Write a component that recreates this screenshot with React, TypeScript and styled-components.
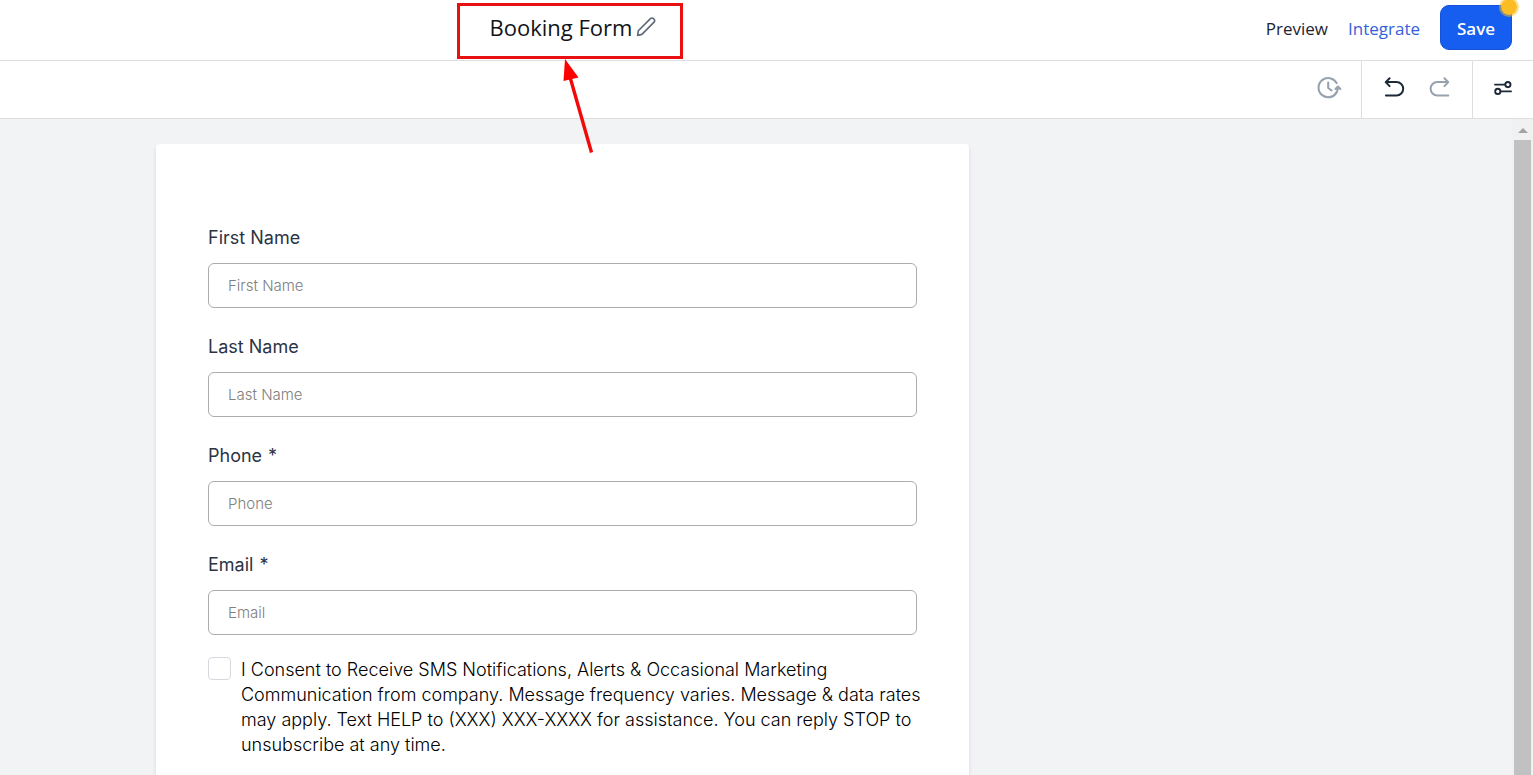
import React from "react";
import styled, { createGlobalStyle } from "styled-components";

const GlobalStyle = createGlobalStyle`
  *, *::before, *::after { box-sizing: border-box; }
  body { margin: 0; background: #f2f3f5; }
  button, input { font: inherit; }
`;

const Shell = styled.div`
  position: relative;
  display: flex;
  flex-direction: column;
  height: 100vh;
  overflow: hidden;
  font-family: "Open Sans", "Noto Sans", sans-serif;
  color: #1d2433;
`;

const Header = styled.header`
  display: grid;
  grid-template-columns: 1fr 387px;
  flex: none;
  height: 61px;
  background: #fff;
  border-bottom: 1px solid #dcdee0;
`;

const TitleArea = styled.div`
  display: flex;
  justify-content: center;
  align-items: center;
  gap: 4px;
  padding-bottom: 6px;
`;

const Title = styled.h1`
  margin: 0;
  font-size: 22px;
  line-height: 30px;
  font-weight: 400;
  color: #101418;
`;

const tones = { dark: "#1d2939", medium: "#5f6876", muted: "#98a1ae" };

const IconButton = styled.button<{ $tone?: keyof typeof tones }>`
  display: flex;
  align-items: center;
  justify-content: center;
  padding: 0;
  border: 0;
  background: none;
  color: ${(p) => tones[p.$tone ?? "dark"]};
  cursor: pointer;
`;

const Actions = styled.nav`
  display: flex;
  justify-content: flex-end;
  align-items: center;
  gap: 20px;
  padding: 0 21px 5px 0;
  font-size: 17px;
  line-height: 24px;
`;

const ActionLink = styled.a<{ $accent?: boolean }>`
  padding-top: 2px;
  color: ${(p) => (p.$accent ? "#3561d8" : "#1d2433")};
  font-weight: 500;
  text-decoration: none;
`;

const SaveButton = styled.button`
  position: relative;
  width: 72px;
  height: 45px;
  padding: 2px 0 0;
  border: 1px solid #1552d8;
  border-radius: 9px;
  background: #155eef;
  color: #fff;
  font-weight: 600;
  cursor: pointer;
`;

const UnsavedDot = styled.span`
  position: absolute;
  top: -9px;
  right: -8px;
  width: 20px;
  height: 20px;
  border: 2px solid rgba(251, 191, 36, 0.5);
  border-radius: 50%;
  background: #fbbc24;
  background-clip: padding-box;
`;

const Toolbar = styled.div`
  display: flex;
  justify-content: flex-end;
  flex: none;
  height: 58px;
  background: #fff;
  border-bottom: 1px solid #dcdee0;
`;

const ToolGroup = styled.div<{ $width: number }>`
  display: flex;
  justify-content: center;
  gap: 22px;
  width: ${(p) => p.$width}px;
  padding-bottom: 4px;
  & + & { border-left: 1px solid #dcdee0; }
`;

const Workspace = styled.div`
  display: flex;
  flex: 1;
  min-height: 0;
`;

const Canvas = styled.main`
  flex: 1;
  min-width: 0;
  padding: 25px 387px 0 0;
  overflow: hidden;
  background: #f2f3f5;
`;

const FormCard = styled.form`
  max-width: 813px;
  min-height: 100%;
  margin: 0 auto;
  padding: 81px 44px 40px 52px;
  border-radius: 4px;
  background: #fff;
  box-shadow: 0 3px 4px rgba(16, 24, 40, 0.12);
  font-family: Inter, sans-serif;
`;

const Field = styled.div`
  display: flex;
  flex-direction: column;
  gap: 12px;
  padding-right: 8px;
  & + & { margin-top: 26px; }
`;

const Label = styled.label`
  font-size: 18px;
  line-height: 26px;
  font-weight: 400;
  color: #2c3345;
`;

const Required = styled.span`
  margin-left: 6px;
`;

const TextInput = styled.input`
  width: 100%;
  height: 45px;
  padding: 0 19px;
  border: 1px solid #acacac;
  border-radius: 6px;
  background: #fff;
  font-size: 15px;
  font-weight: 300;
  color: #2c3345;
  &::placeholder { color: #808080; opacity: 1; }
`;

const Consent = styled.div`
  display: flex;
  align-items: flex-start;
  gap: 10px;
  margin-top: 22px;
`;

const Checkbox = styled.input`
  appearance: none;
  flex: none;
  width: 23px;
  height: 23px;
  margin: 0;
  border: 1px solid #d5d9de;
  border-radius: 4px;
  background: #fff;
  &:checked { background: #155eef; }
`;

const ConsentText = styled.label`
  font-size: 18px;
  line-height: 25px;
  font-weight: 300;
  color: #000;
`;

const ScrollTrack = styled.div`
  display: flex;
  flex-direction: column;
  align-items: center;
  flex: none;
  width: 21px;
  background: #f1f1f1;
`;

const ScrollArrow = styled.span`
  flex: none;
  margin: 9px 0 7px;
  border: 5px solid transparent;
  border-top: 0;
  border-bottom-color: #a3a3a3;
`;

const ScrollThumb = styled.div`
  flex: 1;
  width: 17px;
  background: #c1c1c1;
`;

const Callout = styled.div`
  position: absolute;
  top: 3px;
  left: calc(50% - 310px);
  width: 226px;
  height: 56px;
  border: 3px solid #e81010;
  pointer-events: none;
`;

const CalloutArrow = styled.svg`
  position: absolute;
  top: 53px;
  left: 98px;
`;

const stroke = {
  fill: "none",
  stroke: "currentColor",
  strokeLinecap: "round" as const,
  strokeLinejoin: "round" as const,
};

const PencilIcon = () => (
  <svg width="20" height="20" viewBox="0 0 20 20" {...stroke} strokeWidth="1.6">
    <path d="M1.6 18.4l.7-4.6L14.2 1.9a2.4 2.4 0 0 1 3.6 3.5L5.9 17.4z" />
  </svg>
);

const HistoryIcon = () => (
  <svg width="26" height="24" viewBox="0 0 26 24" {...stroke} strokeWidth="2.1">
    <path d="M20.6 7.1A9.6 9.6 0 1 0 20.4 16.6" />
    <path d="M12.2 6.5V12l3.4 2.5" />
    <path d="M19.6 12.9l2.4-2.3 2.4 2.3M22 11c0 2-.5 4-1.6 5.6" />
  </svg>
);

const UndoIcon = () => (
  <svg width="24" height="24" viewBox="0 0 24 24" {...stroke} strokeWidth="2">
    <path d="M7.6 2.2L3.7 6.1l3.9 4M4 6.1h10.5a6.7 6.7 0 0 1 0 13.4H3.9" />
  </svg>
);

const RedoIcon = () => (
  <svg width="24" height="24" viewBox="0 0 24 24" {...stroke} strokeWidth="2">
    <path d="M16.4 2.2l3.9 3.9-3.9 4M20 6.1H9.3a6.7 6.7 0 0 0 0 13.4h11" />
  </svg>
);

const SettingsIcon = () => (
  <svg width="20" height="16" viewBox="0 0 20 16" {...stroke} strokeWidth="1.9">
    <path d="M2 4.6h10M8 11.4h10" />
    <circle cx="14.9" cy="4.6" r="2.6" />
    <circle cx="4.8" cy="11.4" r="2.6" />
  </svg>
);

const fields = [
  { id: "first-name", label: "First Name", type: "text" },
  { id: "last-name", label: "Last Name", type: "text" },
  { id: "phone", label: "Phone", type: "tel", required: true },
  { id: "email", label: "Email", type: "email", required: true },
];

export default function App() {
  return (
    <Shell>
      <GlobalStyle />
      <Header>
        <TitleArea>
          <Title>Booking Form</Title>
          <IconButton type="button" $tone="medium" aria-label="Rename form"><PencilIcon /></IconButton>
        </TitleArea>
        <Actions>
          <ActionLink href="#preview">Preview</ActionLink>
          <ActionLink href="#integrate" $accent>Integrate</ActionLink>
          <SaveButton type="button">
            Save
            <UnsavedDot />
          </SaveButton>
        </Actions>
      </Header>
      <Toolbar>
        <ToolGroup $width={65}>
          <IconButton type="button" $tone="muted" aria-label="Version history"><HistoryIcon /></IconButton>
        </ToolGroup>
        <ToolGroup $width={111}>
          <IconButton type="button" aria-label="Undo"><UndoIcon /></IconButton>
          <IconButton type="button" $tone="muted" aria-label="Redo"><RedoIcon /></IconButton>
        </ToolGroup>
        <ToolGroup $width={61}>
          <IconButton type="button" aria-label="Form settings"><SettingsIcon /></IconButton>
        </ToolGroup>
      </Toolbar>
      <Workspace>
        <Canvas>
          <FormCard>
            {fields.map((f) => (
              <Field key={f.id}>
                <Label htmlFor={f.id}>
                  {f.label}
                  {f.required && <Required>*</Required>}
                </Label>
                <TextInput id={f.id} type={f.type} placeholder={f.label} required={f.required} />
              </Field>
            ))}
            <Consent>
              <Checkbox id="consent" type="checkbox" />
              <ConsentText htmlFor="consent">
                I Consent to Receive SMS Notifications, Alerts &amp; Occasional Marketing
                Communication from company. Message frequency varies. Message &amp; data rates
                may apply. Text HELP to (XXX) XXX-XXXX for assistance. You can reply STOP to
                unsubscribe at any time.
              </ConsentText>
            </Consent>
          </FormCard>
        </Canvas>
        <ScrollTrack aria-hidden="true">
          <ScrollArrow />
          <ScrollThumb />
        </ScrollTrack>
      </Workspace>
      <Callout aria-hidden="true">
        <CalloutArrow width="44" height="100" viewBox="0 0 44 100">
          <path d="M33.5 93.5L12 18" stroke="#f20a0a" strokeWidth="3.4" fill="none" />
          <path d="M7 0L20.5 18.5L5.5 22z" fill="#ff0000" />
        </CalloutArrow>
      </Callout>
    </Shell>
  );
}
